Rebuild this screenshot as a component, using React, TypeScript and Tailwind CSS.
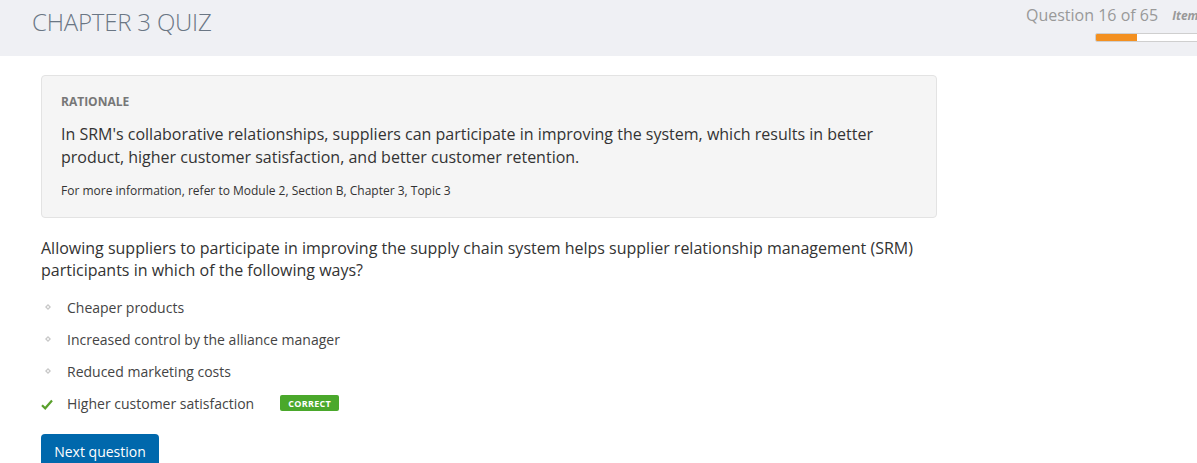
import React from "react";

export default function App() {
  const options = [
    { text: "Cheaper products", correct: false },
    { text: "Increased control by the alliance manager", correct: false },
    { text: "Reduced marketing costs", correct: false },
    { text: "Higher customer satisfaction", correct: true },
  ];
  return (
    <div
      className="w-[1197px] h-[463px] overflow-hidden bg-white"
      style={{ fontFamily: '"Open Sans", sans-serif' }}
    >
      <header className="h-[56px] bg-[#eff0f4] flex justify-between overflow-hidden">
        <h1 className="pl-[32px] pt-[6px] text-[24px] font-light text-[#6a7684] leading-[32px] tracking-[-0.2px]">
          CHAPTER 3 QUIZ
        </h1>
        <div className="flex flex-col shrink-0 w-[171px] pt-[4px]">
          <div className="flex items-start">
            <div className="text-[16px] leading-[22px] text-[#999] whitespace-nowrap">Question 16 of 65</div>
            <div className="pl-[14px] pt-[4px] text-[12px] font-bold italic text-[#999] whitespace-nowrap leading-[16px]">
              Items
            </div>
          </div>
          <div className="mt-[7px] ml-[69px] w-[200px] shrink-0 h-[9px] border border-[#cfcfcf] rounded-[2px] bg-white overflow-hidden">
            <div className="w-[41px] h-full bg-[#f39020]" />
          </div>
        </div>
      </header>

      <main className="pl-[41px] pt-[19px] w-[937px]">
        <section className="bg-[#f5f5f5] border border-[#e3e3e3] rounded-[4px] pl-[19px] pr-[20px] pt-[18px] pb-[17px] h-[143px]">
          <div className="text-[12px] font-bold text-[#777] leading-[16px]">RATIONALE</div>
          <p className="mt-[13px] text-[16px] text-[#333] leading-[23px]">
            In SRM's collaborative relationships, suppliers can participate in improving the system, which results in better
            product, higher customer satisfaction, and better customer retention.
          </p>
          <p className="mt-[14px] text-[12px] text-[#333] leading-[16px]">
            For more information, refer to Module 2, Section B, Chapter 3, Topic 3
          </p>
        </section>

        <p className="mt-[19px] text-[16px] text-[#333] leading-[22px] pr-[10px]">
          Allowing suppliers to participate in improving the supply chain system helps supplier relationship management (SRM)
          participants in which of the following ways?
        </p>

        <ul className="mt-[10px] flex flex-col">
          {options.map((o) => (
            <li key={o.text} className="h-[32px] flex items-center text-[14px] text-[#444]">
              <span className="w-[26px] flex items-center">
                {o.correct ? (
                  <svg width="12" height="11" viewBox="0 0 12 11" className="mt-[2px]">
                    <path d="M1 6.2 L4.2 9.3 L11 1.5" fill="none" stroke="#5aa02c" strokeWidth="2.2" />
                  </svg>
                ) : (
                  <svg width="6" height="6" viewBox="0 0 6 6" className="ml-[4px]">
                    <path d="M3 0 L6 3 L3 6 L0 3 Z" fill="#c8c8c8" />
                    <path d="M3 1.8 L4.2 3 L3 4.2 L1.8 3 Z" fill="#fff" />
                  </svg>
                )}
              </span>
              <span>{o.text}</span>
              {o.correct && (
                <span className="ml-[26px] h-[16px] px-[8px] bg-[#4aa82b] rounded-[2px] text-white text-[9px] font-bold tracking-[0.3px] flex items-center leading-none">
                  CORRECT
                </span>
              )}
            </li>
          ))}
        </ul>

        <button className="mt-[15px] w-[118px] h-[40px] bg-[#0068ac] text-white text-[14px] rounded-[4px] flex items-start justify-center pt-[7px] font-medium">
          Next question
        </button>
      </main>
    </div>
  );
}
